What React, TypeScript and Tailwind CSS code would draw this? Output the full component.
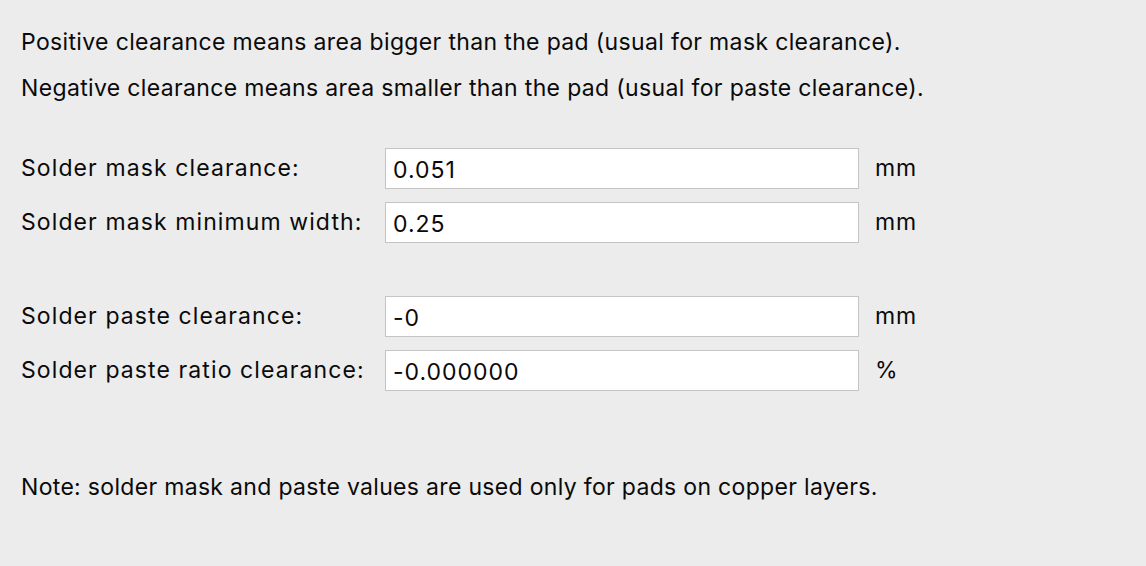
const maskRows = [
  { label: 'Solder mask clearance:', value: '0.051', unit: 'mm' },
  { label: 'Solder mask minimum width:', value: '0.25', unit: 'mm' },
];

const pasteRows = [
  { label: 'Solder paste clearance:', value: '-0', unit: 'mm' },
  { label: 'Solder paste ratio clearance:', value: '-0.000000', unit: '%' },
];

function Field({ label, value, unit }: { label: string; value: string; unit: string }) {
  return (
    <div className="flex items-center h-[41px]">
      <div className="w-[364px] shrink-0 tracking-[1.1px]">{label}</div>
      <div className="w-[474px] h-[41px] shrink-0 bg-white border border-[#c4c4c4] flex items-center pl-[7px] pt-[3px] tracking-[1px]">
        {value}
      </div>
      <div className="pl-[16px] tracking-[0.8px]">{unit}</div>
    </div>
  );
}

export default function App() {
  return (
    <div className="w-[1146px] h-[566px] bg-[#ececec] text-[#0a0a0a] text-[23px] pl-[21px] font-['Inter','Liberation_Sans',sans-serif]">
      <div className="pt-[28px] leading-[28px] tracking-[0.35px]">
        Positive clearance means area bigger than the pad (usual for mask clearance).
      </div>
      <div className="pt-[18px] leading-[28px] tracking-[0.35px]">
        Negative clearance means area smaller than the pad (usual for paste clearance).
      </div>
      <div className="mt-[46px] flex flex-col gap-[13px]">
        {maskRows.map((r) => (
          <Field key={r.label} {...r} />
        ))}
      </div>
      <div className="mt-[53px] flex flex-col gap-[13px]">
        {pasteRows.map((r) => (
          <Field key={r.label} {...r} />
        ))}
      </div>
      <div className="mt-[82px] leading-[28px] tracking-[0.32px]">
        Note: solder mask and paste values are used only for pads on copper layers.
      </div>
    </div>
  );
}
